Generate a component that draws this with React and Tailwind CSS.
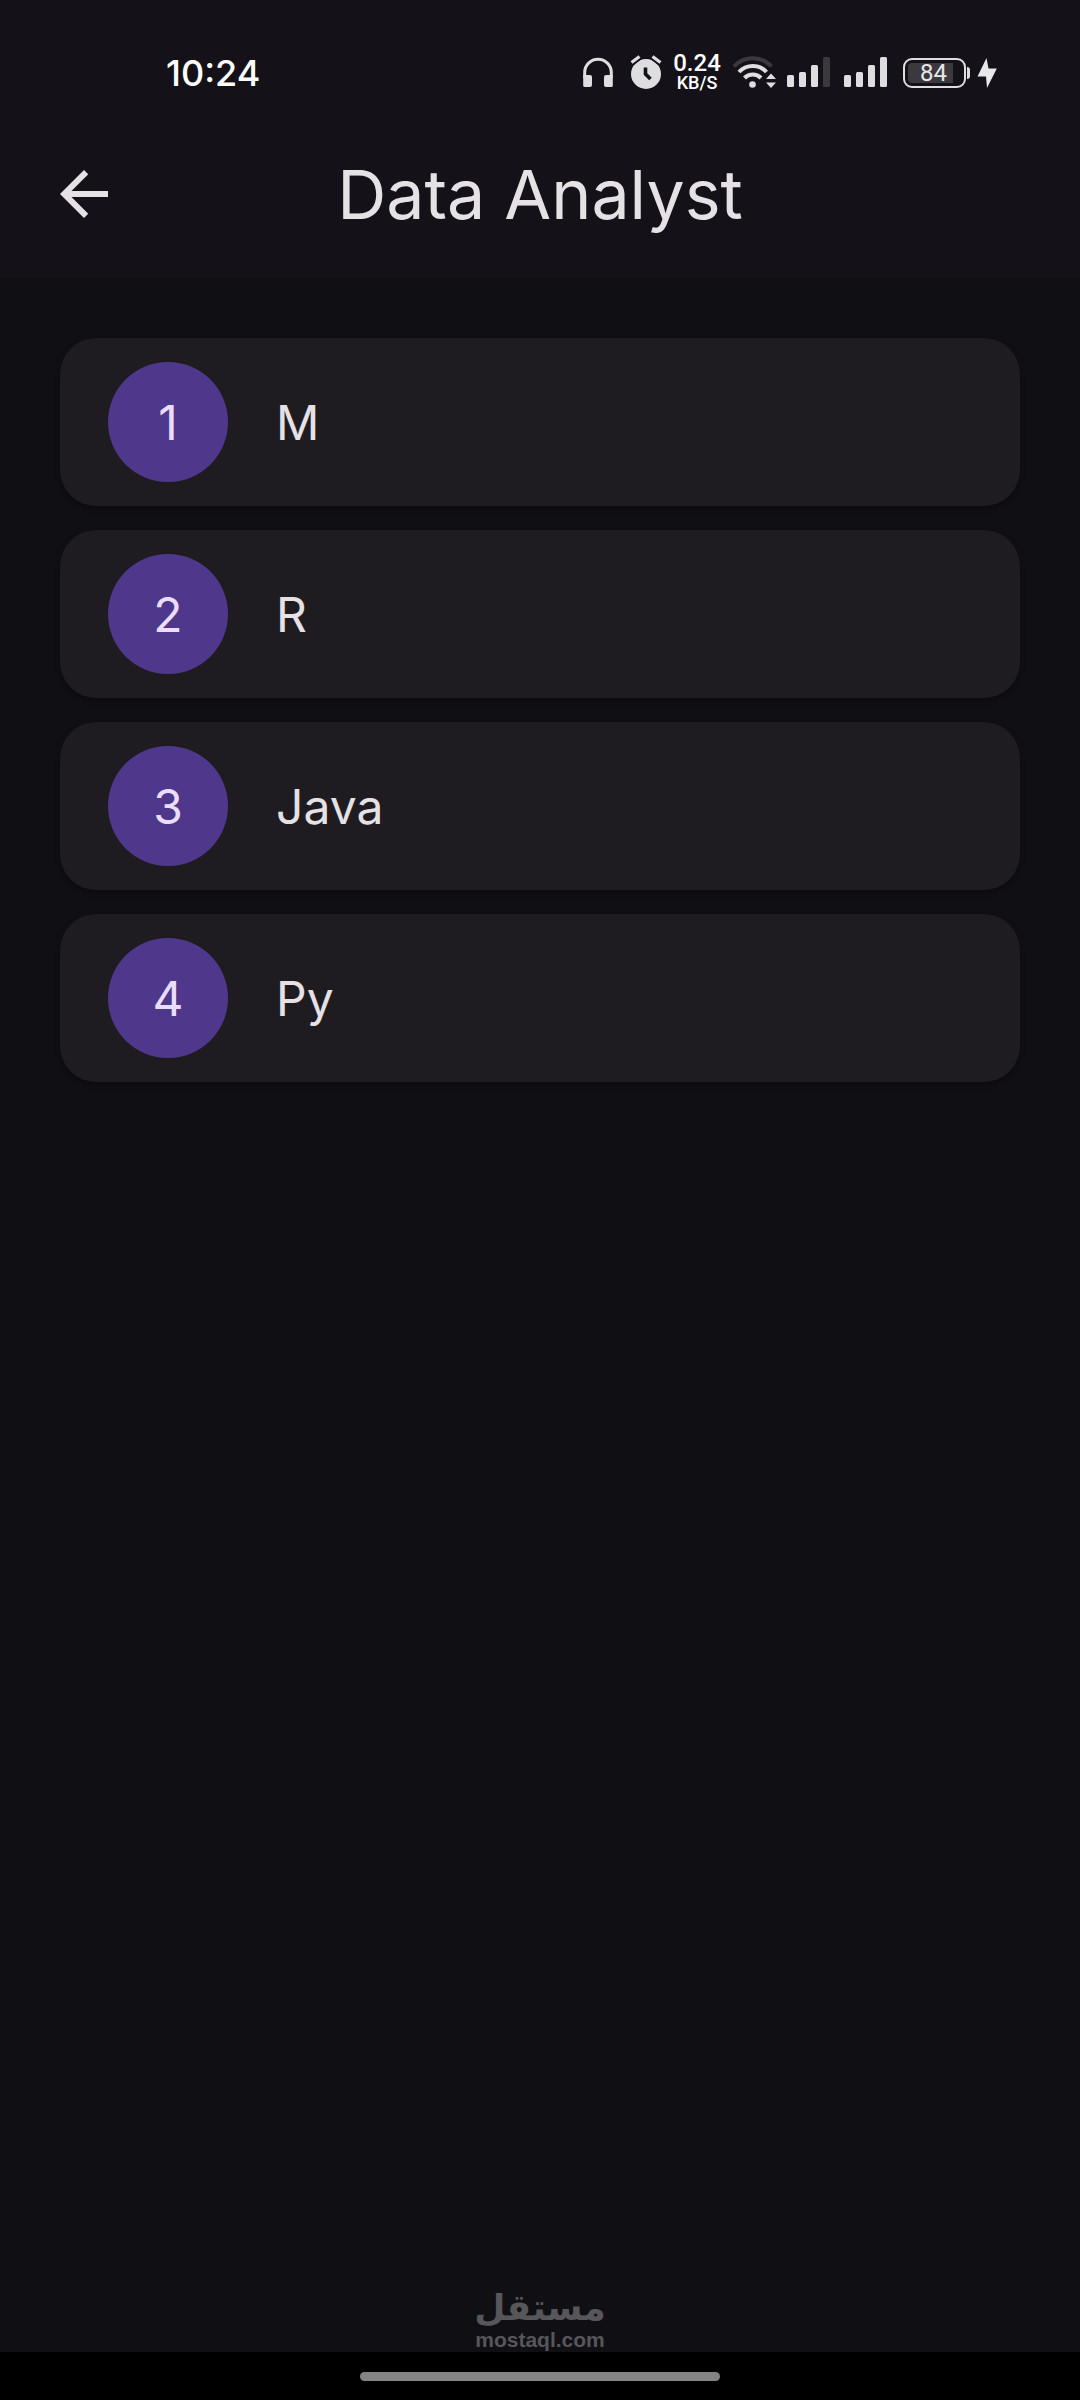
const skills = ['M', 'R', 'Java', 'Py'];

function Signal({ bars }) {
    return (
        <svg viewBox="0 0 47 40" className="w-[47px] h-10" fill="#dedde0">
            <rect x="1" y="22" width="7" height="12" rx="1.5" />
            <rect x="13" y="19" width="7" height="15" rx="1.5" />
            <rect x="25" y="12" width="7" height="22" rx="1.5" />
            <rect x="37" y="4" width="7" height="30" rx="1.5" fill={bars === 4 ? '#dedde0' : '#3b393e'} />
        </svg>
    );
}

function StatusBar() {
    return (
        <div className="flex items-center justify-between h-[110px] pt-9 pl-[166px] pr-[83px] text-white">
            <div className="text-4xl font-medium">10:24</div>
            <div className="flex items-center gap-[10px]">
                {/* headphones */}
                <svg viewBox="0 0 37 40" className="w-[37px] h-10" fill="#dedde0">
                    <path d="M1.7 25V19.5a13.3 13.3 0 0 1 26.6 0V25" fill="none" stroke="#dedde0" strokeWidth="3" />
                    <path d="M.2 22H7a2 2 0 0 1 2 2v8a2 2 0 0 1-2 2H2a1.8 1.8 0 0 1-1.8-2zM29.8 22H23a2 2 0 0 0-2 2v8a2 2 0 0 0 2 2h5a1.8 1.8 0 0 0 1.8-2z" />
                </svg>
                {/* alarm */}
                <svg viewBox="0 0 32 40" className="w-8 h-10">
                    <circle cx="16" cy="21" r="15" fill="#dedde0" />
                    <path d="M1.5 9.5 9.5 3.5M22.5 3.5 30.5 9.5" stroke="#141218" strokeWidth="7" />
                    <path d="M1.5 9.5 9.5 3.5M22.5 3.5 30.5 9.5" stroke="#dedde0" strokeWidth="3.2" />
                    <path d="M15.5 14.5V21L20.5 26" fill="none" stroke="#141218" strokeWidth="3.6" />
                </svg>
                <div className="w-[50px] text-center font-medium font-['Roboto',sans-serif]">
                    <div className="text-2xl leading-5">0.24</div>
                    <div className="text-lg leading-5">KB/S</div>
                </div>
                {/* wifi */}
                <svg viewBox="0 0 44 40" className="w-11 h-10" fill="none" strokeWidth="4">
                    <path d="M2 13.5a25.5 25.5 0 0 1 37.5 0" stroke="#3b393e" />
                    <path d="M7 19a18.5 18.5 0 0 1 27.5 0" stroke="#dedde0" />
                    <path d="M12.5 25a11.5 11.5 0 0 1 16.5 0" stroke="#dedde0" />
                    <circle cx="20.5" cy="31.5" r="3.3" fill="#dedde0" />
                    <path d="M34 26 39 20.5 44 26zM34 29.5h10L39 35z" fill="#dedde0" />
                </svg>
                <Signal bars={3} />
                <Signal bars={4} />
                <div className="flex items-center w-[97px] pl-[3px]">
                    <div className="w-[63px] h-[30px] p-[3px] border-2 border-[#dedde0] rounded-[9px]">
                        <div className="w-[45px] h-5 pl-3 bg-[#3b393e] rounded-l-sm text-2xl leading-5 text-[#e8e7ea] font-['Roboto',sans-serif]">84</div>
                    </div>
                    <div className="w-[3px] h-3 ml-px bg-[#dedde0] rounded-r-sm"></div>
                    <svg viewBox="0 0 20 30" className="w-5 h-[30px] ml-[7px]" fill="#e8e7ea">
                        <path d="M9.5 0 0.5 18.5H9L10 30 19.8 10.5H11.5z" />
                    </svg>
                </div>
            </div>
        </div>
    );
}

export default function App() {
    return (
        <div className="flex flex-col min-h-screen bg-[#100f14] text-[#e6e1e5] font-['Inter',sans-serif]">
            <header className="bg-[#141218]">
                <StatusBar />
                <div className="grid grid-cols-[48px_1fr_48px] items-center h-[168px] px-[60px]">
                    <button aria-label="Back">
                        <svg viewBox="4 4 16 16" className="w-12 h-12" fill="currentColor">
                            <path d="M20 11H7.83l5.59-5.59L12 4l-8 8 8 8 1.41-1.41L7.83 13H20v-2z" />
                        </svg>
                    </button>
                    <h1 className="text-center text-[68px] leading-20">Data Analyst</h1>
                </div>
            </header>

            <main className="flex-1 px-[60px] pt-[60px]">
                <ul className="flex flex-col gap-6">
                    {skills.map((skill, i) => (
                        <li key={skill} className="flex items-center gap-12 px-12 py-6 bg-[#1e1c20] rounded-[36px] shadow-[0_3px_6px_rgba(0,0,0,0.3)]">
                            <div className="flex items-center justify-center w-30 h-30 pt-0.5 rounded-full bg-[#4f378b] text-[#eaddff] text-5xl">{i + 1}</div>
                            <div className="pt-0.5 text-5xl">{skill}</div>
                        </li>
                    ))}
                </ul>
            </main>

            <div className="text-center font-bold text-[#57565a]">
                <div lang="ar" dir="rtl" className="text-4xl leading-10 font-['DejaVu_Sans',sans-serif]">مستقل</div>
                <div className="text-[21px] leading-6 font-['Liberation_Sans',sans-serif]">mostaql.com</div>
            </div>
            <footer className="flex items-center justify-center h-12 bg-black">
                <div className="w-1/3 h-[9px] rounded-full bg-[#848484]"></div>
            </footer>
        </div>
    );
}
